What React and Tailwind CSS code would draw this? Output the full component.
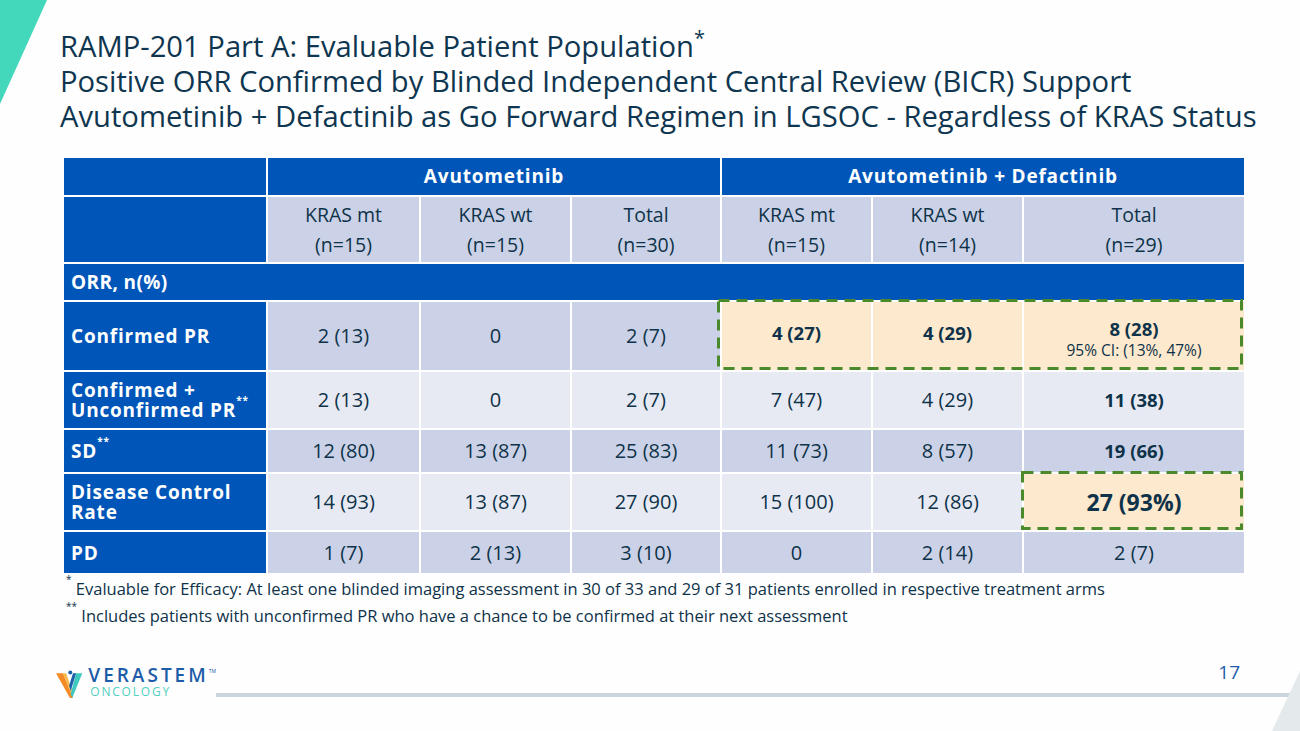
const FONT = "font-['Open_Sans','Lato',sans-serif]";

const DARK = "bg-[#cbd2e7]";
const LIGHT = "bg-[#e7eaf3]";

const ROWS = [
  {
    label: "Confirmed PR",
    bg: DARK,
    h: "h-[70px]",
    cells: ["2 (13)", "0", "2 (7)"],
    combo: ["4 (27)", "4 (29)", "8 (28)"],
    boldCombo: [true, true, true],
    hiCombo: [true, true, true],
  },
  {
    label: (
      <>
        Confirmed +
        <br />
        Unconfirmed PR<sup className="text-[10px] align-[8px]">**</sup>
      </>
    ),
    bg: LIGHT,
    h: "h-[58px]",
    cells: ["2 (13)", "0", "2 (7)"],
    combo: ["7 (47)", "4 (29)", "11 (38)"],
    boldCombo: [false, false, true],
    hiCombo: [false, false, false],
  },
  {
    label: (
      <>
        SD<sup className="text-[10px] align-[8px]">**</sup>
      </>
    ),
    bg: DARK,
    h: "h-[44px]",
    cells: ["12 (80)", "13 (87)", "25 (83)"],
    combo: ["11 (73)", "8 (57)", "19 (66)"],
    boldCombo: [false, false, true],
    hiCombo: [false, false, false],
  },
  {
    label: (
      <>
        Disease Control
        <br />
        Rate
      </>
    ),
    bg: LIGHT,
    h: "h-[58px]",
    cells: ["14 (93)", "13 (87)", "27 (90)"],
    combo: ["15 (100)", "12 (86)", "27 (93%)"],
    boldCombo: [false, false, true],
    hiCombo: [false, false, true],
    bigLast: true,
  },
  {
    label: "PD",
    bg: DARK,
    h: "h-[43px]",
    cells: ["1 (7)", "2 (13)", "3 (10)"],
    combo: ["0", "2 (14)", "2 (7)"],
    boldCombo: [false, false, false],
    hiCombo: [false, false, false],
  },
];

function DashBox({ className }) {
  return (
    <svg className={`pointer-events-none absolute ${className}`} preserveAspectRatio="none">
      <rect
        x="1.5"
        y="1.5"
        width="calc(100% - 3px)"
        height="calc(100% - 3px)"
        fill="none"
        stroke="#4b8a2c"
        strokeWidth="3"
        strokeDasharray="11 7"
      />
    </svg>
  );
}

function Logo() {
  return (
    <div className="flex items-start gap-[6px]">
      <svg width="34" height="36" viewBox="0 0 34 36" className="mt-[2px]">
        <polygon points="0,4 9,4 22,36 18,36" fill="#f28a26" />
        <polygon points="9,4 13,4 21,27 20,31" fill="#f7b84a" />
        <polygon points="34,4 26,4 19,31 21,36" fill="#3ec9c0" />
        <polygon points="26,4 22,4 17,20 19,27" fill="#1d5fa8" />
        <circle cx="18.5" cy="3" r="2.6" fill="#1d5fa8" />
      </svg>
      <div className="-mt-[2px] flex flex-col">
        <div className="h-[19px] text-[19px] font-semibold leading-[19px] tracking-[3px] text-[#1d5ca8]">
          VERASTEM<span className="align-[9px] text-[5px] font-normal tracking-normal">TM</span>
        </div>
        <div className="mt-[4px] h-[14px] pl-[2px] text-[12px] leading-[14px] tracking-[1.8px] text-[#4fd0c0]">
          ONCOLOGY
        </div>
      </div>
    </div>
  );
}

export default function App() {
  const th = "border-2 border-white text-center align-middle";
  return (
    <div className={`relative flex h-[731px] w-[1300px] flex-col overflow-hidden bg-[#fefefe] text-[#0e3249] ${FONT}`}>
      <svg className="absolute left-0 top-0" width="50" height="105">
        <polygon points="0,0 47,0 0,104" fill="#43d7bb" />
      </svg>
      <svg className="absolute bottom-0 right-0" width="30" height="60">
        <polygon points="30,0 30,60 2,60" fill="#e4e9ec" />
      </svg>

      <div className="pl-[60px] pt-[29px] text-[29.2px] leading-[35px] text-[#0f3650]">
        <div>
          RAMP-201 Part A: Evaluable Patient Population
          <span className="relative -top-[12px] inline-block text-[20px] leading-none">*</span>
        </div>
        <div>Positive ORR Confirmed by Blinded Independent Central Review (BICR) Support</div>
        <div>Avutometinib + Defactinib as Go Forward Regimen in LGSOC - Regardless of KRAS Status</div>
      </div>

      <div className="relative ml-[62px] mt-[22px] w-[1182px]">
        <table className="w-full table-fixed border-collapse text-[20px]">
          <colgroup>
            <col className="w-[204px]" />
            <col className="w-[153px]" />
            <col className="w-[151px]" />
            <col className="w-[150px]" />
            <col className="w-[151px]" />
            <col className="w-[151px]" />
            <col className="w-[222px]" />
          </colgroup>
          <tbody>
            <tr className="h-[39px] bg-[#0056b8] text-[19px] font-bold tracking-[0.8px] text-white">
              <td className={th}></td>
              <td className={th} colSpan={3}>Avutometinib</td>
              <td className={th} colSpan={3}>Avutometinib + Defactinib</td>
            </tr>
            <tr className="h-[67px]">
              <td className={`${th} bg-[#0056b8]`}></td>
              {[
                ["KRAS mt", "(n=15)"],
                ["KRAS wt", "(n=15)"],
                ["Total", "(n=30)"],
                ["KRAS mt", "(n=15)"],
                ["KRAS wt", "(n=14)"],
                ["Total", "(n=29)"],
              ].map(([a, b], i) => (
                <td key={i} className={`${th} ${DARK} text-[19.5px] leading-[30px]`}>
                  {a}
                  <br />
                  {b}
                </td>
              ))}
            </tr>
            <tr className="h-[38px] bg-[#0056b8] font-bold text-white">
              <td className="border-2 border-white pl-[7px] text-left text-[19px] tracking-[0.4px]" colSpan={7}>
                ORR, n(%)
              </td>
            </tr>
            {ROWS.map((r, ri) => (
              <tr key={ri} className={r.h}>
                <td className="border-2 border-white bg-[#0056b8] pl-[7px] text-left text-[19px] font-bold leading-[20px] tracking-[0.8px] text-white">
                  {r.label}
                </td>
                {r.cells.map((c, i) => (
                  <td key={i} className={`${th} ${r.bg}`}>
                    {c}
                  </td>
                ))}
                {r.combo.map((c, i) => (
                  <td
                    key={i}
                    className={`${th} ${r.hiCombo[i] ? "bg-[#fde9cd]" : r.bg} ${r.boldCombo[i] ? "font-bold" : ""} ${
                      r.bigLast && i === 2 ? "text-[23px]" : r.boldCombo[i] ? "text-[18.5px]" : ""
                    }`}
                  >
                    {ri === 0 && i === 2 ? (
                      <div className="pt-[6px] leading-[22px]">
                        8 (28)
                        <div className="text-[15.5px] font-normal leading-[20px]">95% CI: (13%, 47%)</div>
                      </div>
                    ) : ri === 0 ? (
                      <div className="-mt-[6px]">{c}</div>
                    ) : (
                      c
                    )}
                  </td>
                ))}
              </tr>
            ))}
          </tbody>
        </table>
        <DashBox className="left-[655px] top-[143px] h-[71px] w-[526px]" />
        <DashBox className="left-[959px] top-[315px] h-[59px] w-[222px]" />
      </div>

      <div className="ml-[66px] mt-0 text-[16.5px] leading-[27px]">
        <div>
          <sup className="text-[10px] align-[7px]">*</sup> Evaluable for Efficacy: At least one blinded imaging assessment
          in 30 of 33 and 29 of 31 patients enrolled in respective treatment arms
        </div>
        <div>
          <sup className="text-[10px] align-[7px]">**</sup> Includes patients with unconfirmed PR who have a chance to be
          confirmed at their next assessment
        </div>
      </div>

      <div className="mb-[29px] mt-auto flex items-end">
        <div className="ml-[56px] w-[160px]">
          <Logo />
        </div>
        <div className="flex flex-1 flex-col">
          <div className="mb-[11px] self-end pr-[60px] text-[19px] leading-none text-[#1e5da8]">17</div>
          <div className="mb-[5px] h-[4px] bg-[#ccd5dc]"></div>
        </div>
      </div>
    </div>
  );
}
